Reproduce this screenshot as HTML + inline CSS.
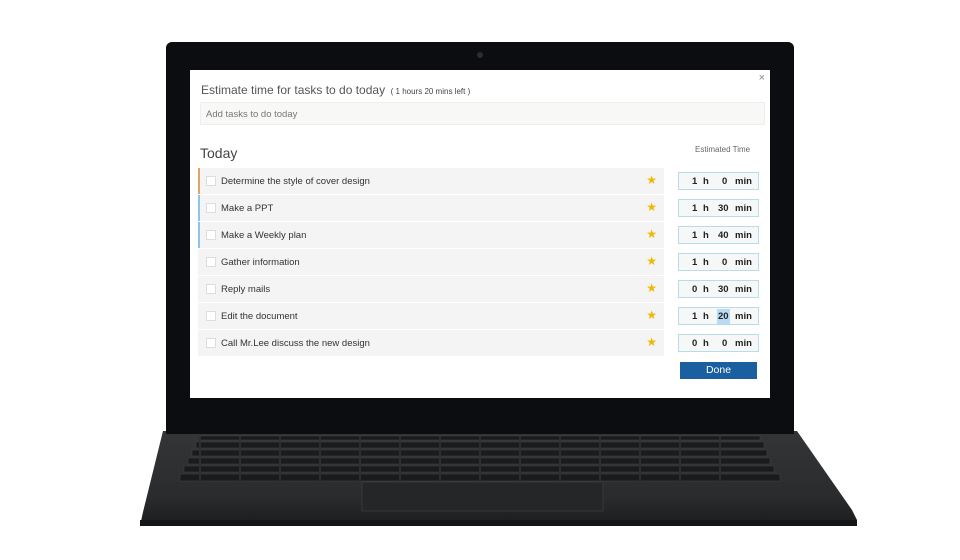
<!DOCTYPE html>
<html><head><style>
*{margin:0;padding:0;box-sizing:border-box}
body{width:960px;height:560px;background:#fff;position:relative;overflow:hidden;font-family:"Liberation Sans",sans-serif}
.abs{position:absolute}
.bezel{left:166px;top:42px;width:628px;height:392px;background:#0c0d10;border-radius:6px 6px 0 0}
.base{left:0;top:0}
.dlg{left:190px;top:70px;width:580px;height:328px;background:#fff}
.t{color:#555;font-size:12px}
.row{position:absolute;left:8px;width:466px;height:26px;background:#f4f4f4;}
.row .cb{position:absolute;left:8px;top:8px;width:10px;height:10px;border:1px solid #ddd;background:#fff}
.row .lb{position:absolute;left:23px;top:8px;font-size:9.5px;color:#333}
.row .st{position:absolute;right:7px;top:5px;color:#f2b800;font-size:12px}
.tm{position:absolute;left:488px;width:81px;height:18px;background:#f6f8f8;border:1px solid #b9dde8;font-size:9.5px;font-weight:bold;color:#222}
.tm span{position:absolute;top:3px}
</style></head><body>
<svg class="abs base" width="960" height="560">
<defs><linearGradient id="g" x1="0" y1="0" x2="0" y2="1"><stop offset="0" stop-color="#343537"/><stop offset="0.7" stop-color="#2a2b2d"/><stop offset="1" stop-color="#1b1c1e"/></linearGradient></defs>
<polygon points="163,431 797,431 852,510 857,520 820,526 140,526 143,512" fill="url(#g)"/>
<rect x="140" y="520" width="717" height="6" fill="#151515"/>
<g fill="#1a1b1d" stroke="#444" stroke-width="0.5">
<rect x="200" y="436" width="560" height="4"/>
<rect x="196" y="442" width="568" height="6"/>
<rect x="192" y="450" width="575" height="6"/>
<rect x="188" y="458" width="582" height="6"/>
<rect x="184" y="466" width="590" height="6"/>
<rect x="180" y="474" width="600" height="7"/>
</g>
<g stroke="#2e2f31" stroke-width="2">
<path d="M200 436V482M240 436V482M280 436V482M320 436V482M360 436V482M400 436V482M440 436V482M480 436V482M520 436V482M560 436V482M600 436V482M640 436V482M680 436V482M720 436V482"/>
</g>
<rect x="362" y="482" width="241" height="29" fill="#252628" stroke="#444" stroke-width="0.6"/>
<rect x="790" y="431" width="3" height="3" fill="#3c3"/>
</svg>
<div class="abs bezel"></div>
<svg class="abs" style="left:476px;top:51px" width="8" height="8"><circle cx="4" cy="4" r="3" fill="#2a2c33"/></svg>
<div class="abs dlg">
<div class="abs" style="right:5px;top:2px;color:#888;font-size:11px">×</div>
<div class="abs t" style="left:11px;top:13px;font-size:12px;color:#555">Estimate time for tasks to do today <span style="font-size:8px;color:#444">&nbsp;( 1 hours 20 mins left )</span></div>
<div class="abs" style="left:10px;top:32px;width:565px;height:23px;background:#f8f8f6;border:1px solid #eee;font-size:9.5px;color:#777;padding:6px 5px">Add tasks to do today</div>
<div class="abs" style="left:10px;top:75px;font-size:14px;color:#444">Today</div>
<div class="abs" style="left:505px;top:75px;font-size:8px;color:#666">Estimated Time</div>

<div class="row" style="top:98px;box-shadow:inset 2px 0 #e0a36a"><div class="cb"></div><div class="lb">Determine the style of cover design</div><div class="st">★</div></div>
<div class="row" style="top:125px;box-shadow:inset 2px 0 #8cc3e8"><div class="cb"></div><div class="lb">Make a PPT</div><div class="st">★</div></div>
<div class="row" style="top:152px;box-shadow:inset 2px 0 #8cc3e8"><div class="cb"></div><div class="lb">Make a Weekly plan</div><div class="st">★</div></div>
<div class="row" style="top:179px"><div class="cb"></div><div class="lb">Gather information</div><div class="st">★</div></div>
<div class="row" style="top:206px"><div class="cb"></div><div class="lb">Reply mails</div><div class="st">★</div></div>
<div class="row" style="top:233px"><div class="cb"></div><div class="lb">Edit the document</div><div class="st">★</div></div>
<div class="row" style="top:260px"><div class="cb"></div><div class="lb">Call Mr.Lee discuss the new design</div><div class="st">★</div></div>

<div class="tm" style="top:102px"><span style="left:13px">1</span><span style="left:24px">h</span><span style="left:43px">0</span><span style="left:56px">min</span></div>
<div class="tm" style="top:129px"><span style="left:13px">1</span><span style="left:24px">h</span><span style="left:39px">30</span><span style="left:56px">min</span></div>
<div class="tm" style="top:156px"><span style="left:13px">1</span><span style="left:24px">h</span><span style="left:39px">40</span><span style="left:56px">min</span></div>
<div class="tm" style="top:183px"><span style="left:13px">1</span><span style="left:24px">h</span><span style="left:43px">0</span><span style="left:56px">min</span></div>
<div class="tm" style="top:210px"><span style="left:13px">0</span><span style="left:24px">h</span><span style="left:39px">30</span><span style="left:56px">min</span></div>
<div class="tm" style="top:237px"><span style="left:13px">1</span><span style="left:24px">h</span><span style="left:38px;top:1px;height:15px;padding:2px 1px 0;background:#b8dcf5">20</span><span style="left:56px">min</span></div>
<div class="tm" style="top:264px"><span style="left:13px">0</span><span style="left:24px">h</span><span style="left:43px">0</span><span style="left:56px">min</span></div>

<div class="abs" style="left:490px;top:292px;width:77px;height:17px;background:#1a5fa0;color:#fff;font-size:10.5px;text-align:center;line-height:17px">Done</div>
</div>
</body></html>
